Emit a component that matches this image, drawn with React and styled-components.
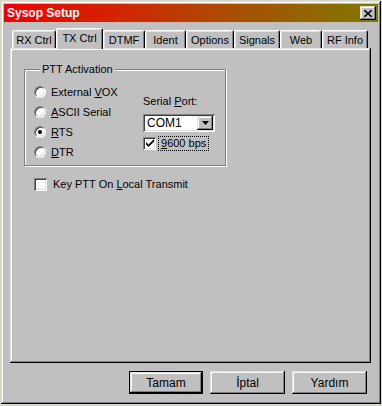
import React from 'react';
import styled, { createGlobalStyle } from 'styled-components';

const Global = createGlobalStyle`
    body {
        margin: 0;
        background: #d6d6c8;
        font-family: 'Liberation Sans', Arial, sans-serif;
        font-size: 11px;
        color: #000;
    }
`;

const raised = `
    box-shadow: inset -1px -1px #000, inset 1px 1px #dfdfdf, inset -2px -2px #808080, inset 2px 2px #fff;
`;

const sunken = `
    box-shadow: inset 1px 1px #808080, inset -1px -1px #fff, inset 2px 2px #404040, inset -2px -2px #dfdfdf;
`;

const Window = styled.div`
    box-sizing: border-box;
    width: 380px;
    height: 403px;
    margin: 1px 0 0 1px;
    padding: 3px;
    background: #c0c0c0;
    display: flex;
    flex-direction: column;
    ${raised}
`;

const TitleBar = styled.div`
    height: 18px;
    display: flex;
    align-items: center;
    justify-content: space-between;
    padding: 0 2px 0 3px;
    background: linear-gradient(90deg, #f00000 0%, #d42400 30%, #a85000 62%, #807800 100%);
    color: #fff;
    font-weight: bold;
    font-size: 12px;
`;

const CloseBox = styled.div`
    width: 16px;
    height: 14px;
    background: #c0c0c0;
    display: flex;
    align-items: center;
    justify-content: center;
    ${raised}
`;

const Body = styled.div`
    padding: 6px 6px 0 6px;
    display: flex;
    flex-direction: column;
`;

const TabRow = styled.div`
    display: flex;
    align-items: flex-end;
    height: 20px;
    padding-left: 2px;
    position: relative;
    z-index: 1;
`;

const Tab = styled.div`
    box-sizing: border-box;
    width: ${p => p.w}px;
    height: ${p => (p.active ? 21 : 18)}px;
    margin-bottom: ${p => (p.active ? -1 : 0)}px;
    padding-top: 3px;
    text-align: center;
    background: #c0c0c0;
    border-top: 1px solid #fff;
    border-left: 1px solid #fff;
    border-right: 1px solid #000;
    border-radius: 2px 2px 0 0;
    box-shadow: inset -1px 0 #808080, inset 1px 1px #dfdfdf;
`;

const Panel = styled.div`
    box-sizing: border-box;
    width: 361px;
    height: 315px;
    padding: 15px 14px;
    background: #c0c0c0;
    ${raised}
`;

const Group = styled.fieldset`
    box-sizing: border-box;
    width: 202px;
    height: 103px;
    margin: 0;
    padding: 6px 0 0 9px;
    border: 1px solid #808080;
    box-shadow: 1px 1px 0 #fff, inset 1px 1px 0 #fff;
    display: flex;
`;

const Legend = styled.legend`
    padding: 0 2px;
    margin-left: 6px;
    line-height: 13px;
    background: #c0c0c0;
`;

const RadioList = styled.div`
    display: flex;
    flex-direction: column;
    width: 109px;
`;

const OptionRow = styled.label`
    display: flex;
    align-items: center;
    height: ${p => p.h || 20}px;
    gap: ${p => p.gap || 5}px;
    white-space: nowrap;
`;

const RadioDot = styled.span`
    box-sizing: border-box;
    width: 12px;
    height: 12px;
    border-radius: 50%;
    background: #fff;
    border: 1px solid;
    border-color: #808080 #fff #fff #808080;
    box-shadow: inset 1px 1px #404040, inset -1px -1px #dfdfdf;
    display: flex;
    align-items: center;
    justify-content: center;
    flex-shrink: 0;

    &::after {
        content: '';
        width: 4px;
        height: 4px;
        border-radius: 50%;
        background: ${p => (p.on ? '#000' : 'transparent')};
    }
`;

const CheckBox = styled.span`
    box-sizing: border-box;
    width: 13px;
    height: 13px;
    background: #fff;
    display: flex;
    align-items: center;
    justify-content: center;
    flex-shrink: 0;
    ${sunken}
`;

const PortColumn = styled.div`
    display: flex;
    flex-direction: column;
    padding-top: 13px;
`;

const FieldLabel = styled.div`
    line-height: 13px;
    margin-bottom: 6px;
`;

const Combo = styled.div`
    box-sizing: border-box;
    width: 72px;
    height: 18px;
    padding: 2px;
    background: #fff;
    display: flex;
    align-items: center;
    ${sunken}
`;

const ComboText = styled.span`
    flex: 1;
    padding-left: 2px;
    font-size: 12px;
`;

const DropButton = styled.span`
    width: 16px;
    height: 14px;
    background: #c0c0c0;
    display: flex;
    align-items: center;
    justify-content: center;
    ${raised}
`;

const FocusLabel = styled.span`
    padding: 0 2px;
    outline: 1px dotted #000;
    line-height: 13px;
`;

const LooseOption = styled.div`
    margin: 11px 0 0 10px;
`;

const ButtonRow = styled.div`
    display: flex;
    justify-content: flex-end;
    gap: 7px;
    margin-top: 8px;
    padding-right: 5px;
`;

const Button = styled.button`
    box-sizing: border-box;
    width: ${p => (p.primary ? 74 : 75)}px;
    height: 23px;
    padding: 0;
    border: ${p => (p.primary ? '1px solid #000' : 'none')};
    background: #c0c0c0;
    font-family: 'Liberation Sans', Arial, sans-serif;
    font-size: 12px;
    color: #000;
    ${raised}
`;

const tabs = [
    { label: 'RX Ctrl', w: 44 },
    { label: 'TX Ctrl', w: 47, active: true },
    { label: 'DTMF', w: 42 },
    { label: 'Ident', w: 41 },
    { label: 'Options', w: 48 },
    { label: 'Signals', w: 46 },
    { label: 'Web', w: 42 },
    { label: 'RF Info', w: 46 },
];

const radios = [
    { pre: 'External ', key: 'V', post: 'OX' },
    { pre: '', key: 'A', post: 'SCII Serial' },
    { pre: '', key: 'R', post: 'TS', on: true },
    { pre: '', key: 'D', post: 'TR' },
];

const Check = () => (
    <svg width="8" height="8" viewBox="0 0 8 8">
        <path d="M0 3 L0 5.5 L2.5 8 L8 2.5 L8 0 L2.5 5.5 Z" fill="#000" />
    </svg>
);

const App = () => {
    return (
        <Window>
            <Global />
            <TitleBar>
                <span>Sysop Setup</span>
                <CloseBox>
                    <svg width="8" height="7" viewBox="0 0 8 7">
                        <path d="M0 0 L8 7 M8 0 L0 7" stroke="#000" strokeWidth="1.6" />
                    </svg>
                </CloseBox>
            </TitleBar>

            <Body>
                <TabRow>
                    {tabs.map(t =>
                        <Tab key={t.label} w={t.w} active={t.active}>{t.label}</Tab>
                    )}
                </TabRow>

                <Panel>
                    <Group>
                        <Legend>PTT Activation</Legend>
                        <RadioList>
                            {radios.map(r =>
                                <OptionRow key={r.key}>
                                    <RadioDot on={r.on} />
                                    <span>{r.pre}<u>{r.key}</u>{r.post}</span>
                                </OptionRow>
                            )}
                        </RadioList>
                        <PortColumn>
                            <FieldLabel>Serial <u>P</u>ort:</FieldLabel>
                            <Combo>
                                <ComboText>COM1</ComboText>
                                <DropButton>
                                    <svg width="7" height="4" viewBox="0 0 7 4">
                                        <path d="M0 0 H7 L3.5 4 Z" fill="#000" />
                                    </svg>
                                </DropButton>
                            </Combo>
                            <OptionRow h={22} gap={3}>
                                <CheckBox><Check /></CheckBox>
                                <FocusLabel><u>9</u>600 bps</FocusLabel>
                            </OptionRow>
                        </PortColumn>
                    </Group>

                    <LooseOption>
                        <OptionRow h={14} gap={6}>
                            <CheckBox />
                            <span>Key PTT On <u>L</u>ocal Transmit</span>
                        </OptionRow>
                    </LooseOption>
                </Panel>

                <ButtonRow>
                    <Button primary>Tamam</Button>
                    <Button>İptal</Button>
                    <Button>Yardım</Button>
                </ButtonRow>
            </Body>
        </Window>
    );
};

export default App;
